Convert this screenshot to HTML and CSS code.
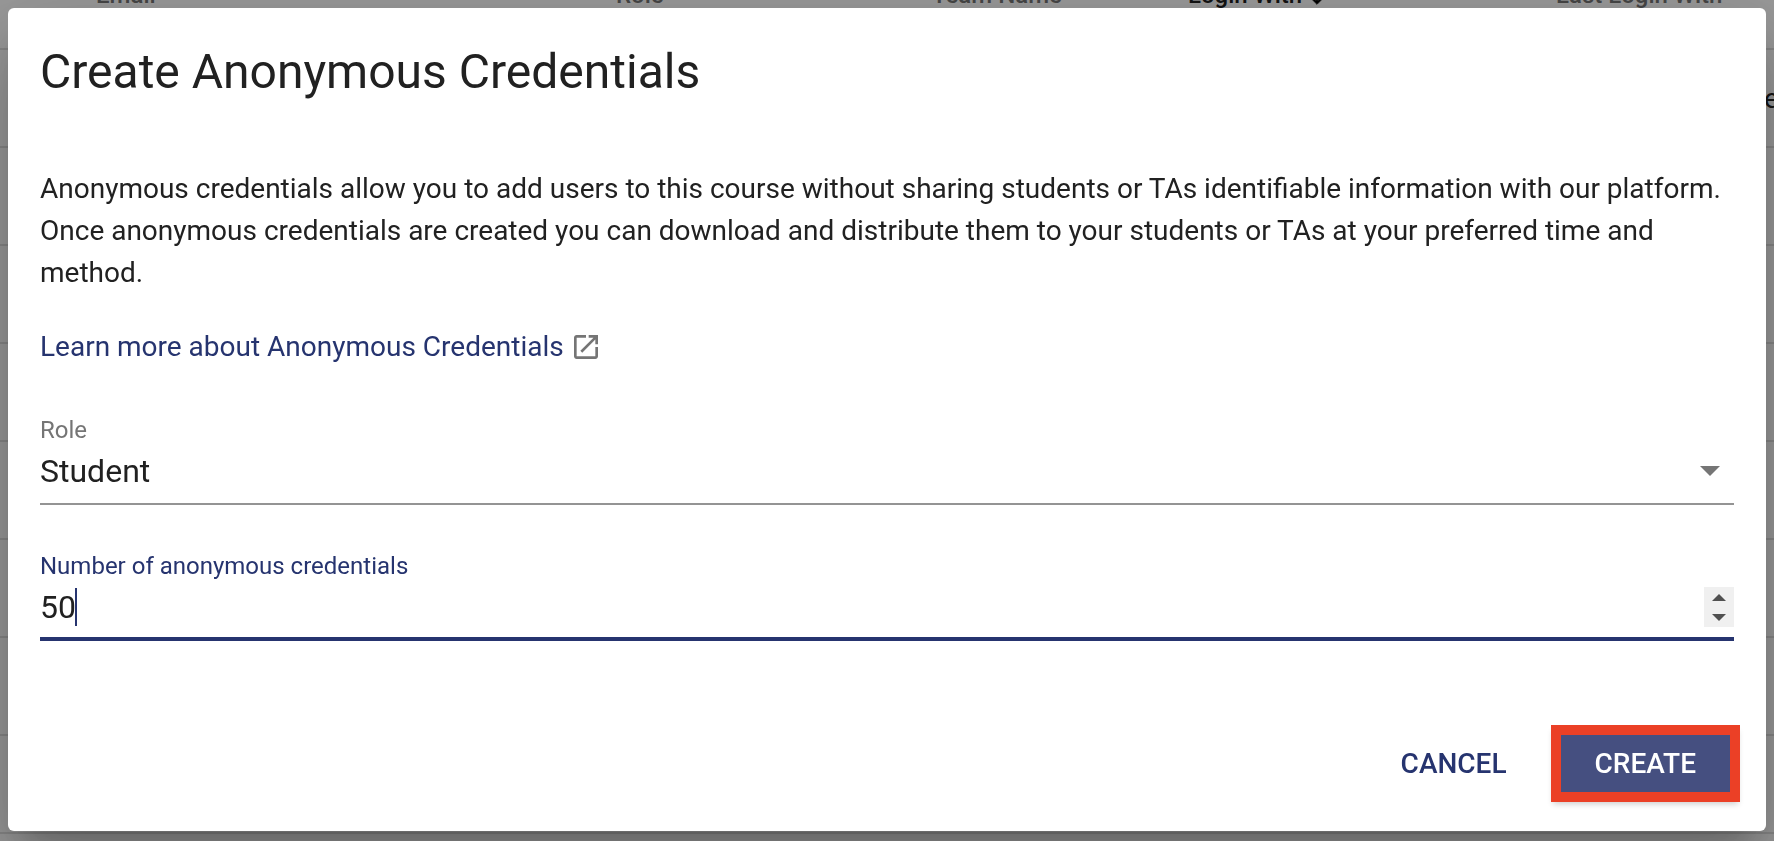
FILE: index.html
```html
<!DOCTYPE html>
<html lang="en">
<head>
  <meta charset="UTF-8">
  <meta name="viewport" content="width=device-width, initial-scale=1.0">
  <title>Create Anonymous Credentials</title>
  <link rel="stylesheet" href="styles.css">
</head>
<body>
  <table class="users">
    <thead>
      <tr>
        <th class="col-email">Email</th>
        <th class="col-role">Role</th>
        <th class="col-team">Team Name</th>
        <th class="col-login sorted">Login With
          <svg class="sort-icon" viewBox="0 0 24 24" aria-hidden="true"><path d="M20 12l-1.410-1.410L13 16.170V4h-2v12.170l-5.580-5.590L4 12l8 8 8-8z"/></svg>
        </th>
        <th class="col-last">Last Login With</th>
        <th class="col-end"></th>
      </tr>
    </thead>
    <tbody>
      <tr><td colspan="5"></td><td>e</td></tr>
      <tr><td colspan="6"></td></tr>
      <tr><td colspan="6"></td></tr>
      <tr><td colspan="6"></td></tr>
      <tr><td colspan="6"></td></tr>
      <tr><td colspan="6"></td></tr>
      <tr><td colspan="6"></td></tr>
      <tr><td colspan="6"></td></tr>
    </tbody>
  </table>

  <div class="backdrop">
    <form class="dialog" role="dialog" aria-labelledby="dialog-title">
      <h1 id="dialog-title">Create Anonymous Credentials</h1>

      <p class="intro">Anonymous credentials allow you to add users to this course without sharing students or TAs identifiable information with our platform. Once anonymous credentials are created you can download and distribute them to your students or TAs at your preferred time and method.</p>

      <a class="learn-more" href="#">Learn more about Anonymous Credentials
        <svg viewBox="0 0 24 24" aria-hidden="true"><path d="M19 19H5V5h7V3H5c-1.110 0-2 .9-2 2v14c0 1.100.890 2 2 2h14c1.100 0 2-.9 2-2v-7h-2v7zM14 3v2h3.590l-9.830 9.830 1.410 1.410L19 6.410V10h2V3h-7z"/></svg>
      </a>

      <div class="field">
        <label for="role">Role</label>
        <div class="control">
          <select id="role">
            <option>Student</option>
            <option>TA</option>
          </select>
          <svg class="arrow" viewBox="0 0 20 10" aria-hidden="true"><path d="M0 0h20L10 10z"/></svg>
        </div>
      </div>

      <div class="field focused">
        <label for="count">Number of anonymous credentials</label>
        <div class="control">
          <input type="number" id="count" min="1" value="50">
          <span class="caret"></span>
          <div class="spinner">
            <button type="button" aria-label="Increase" onclick="document.getElementById('count').stepUp()">
              <svg viewBox="0 0 14 7"><path d="M0 7h14L7 0z"/></svg>
            </button>
            <button type="button" aria-label="Decrease" onclick="document.getElementById('count').stepDown()">
              <svg viewBox="0 0 14 7"><path d="M0 0h14L7 7z"/></svg>
            </button>
          </div>
        </div>
      </div>

      <div class="actions">
        <button type="button" class="btn">CANCEL</button>
        <button type="button" class="btn btn-create">CREATE</button>
      </div>
    </form>
  </div>
</body>
</html>
```
FILE: styles.css
```css
* {
  box-sizing: border-box;
}

body {
  margin: 0;
  height: 100vh;
  overflow: hidden;
  font-family: Roboto, "Liberation Sans", sans-serif;
  font-size: 28px;
  color: #212121;
  background-color: #fff;
}

/* users table, scrolled up behind the dialog */
.users {
  width: 100%;
  margin-top: -58px;
  table-layout: fixed;
  border-collapse: separate;
  border-spacing: 0;
}

.users th,
.users td {
  height: 98px;
  padding: 0;
  border-bottom: 2px solid #e0e0e0;
  text-align: left;
  white-space: nowrap;
}

.users th {
  height: 108px;
  font-size: 24px;
  font-weight: 500;
  color: #757575;
}

.users .sorted {
  color: #212121;
}

.users .col-email {
  width: 616px;
  padding-left: 96px;
}

.col-role {
  width: 316px;
}

.col-team {
  width: 256px;
}

.col-login {
  width: 368px;
}

.col-end {
  width: 10px;
}

.sort-icon {
  width: 22px;
  height: 22px;
  margin-left: -2px;
  stroke: #212121;
  vertical-align: middle;
}

.backdrop {
  position: fixed;
  inset: 0;
  padding: 8px;
  background-color: rgba(0, 0, 0, 0.4);
}

.dialog {
  display: flex;
  flex-direction: column;
  padding: 32px 32px 29px;
  background-color: #fff;
  border-radius: 6px;
  box-shadow: 0 22px 30px -14px rgba(0, 0, 0, 0.2),
    0 48px 76px 6px rgba(0, 0, 0, 0.14),
    0 18px 92px 16px rgba(0, 0, 0, 0.12);
}

h1 {
  margin: 0 0 64px;
  font-size: 48px;
  font-weight: 400;
  line-height: 64px;
}

.intro {
  margin: 0 0 32px;
  line-height: 42px;
}

.learn-more {
  display: flex;
  align-items: center;
  align-self: flex-start;
  gap: 6px;
  margin-bottom: 47px;
  line-height: 42px;
  color: #26346f;
  text-decoration: none;
}

.learn-more svg {
  width: 32px;
  height: 32px;
  fill: #757575;
}

.field {
  margin-bottom: 46px;
  border-bottom: 2px solid #949494;
}

.field label {
  display: block;
  font-size: 24px;
  line-height: 31px;
  color: #757575;
}

.control {
  position: relative;
  display: flex;
  align-items: center;
  padding: 5px 0 12px;
}

.control select,
.control input {
  flex: 1;
  min-width: 0;
  height: 40px;
  padding: 0;
  border: none;
  outline: none;
  font: inherit;
  font-size: 32px;
  color: inherit;
  background: none;
  appearance: none;
}

.control input {
  appearance: textfield;
}

.control input::-webkit-inner-spin-button {
  display: none;
}

.arrow {
  position: absolute;
  right: 14px;
  width: 20px;
  height: 10px;
  fill: #757575;
  pointer-events: none;
}

.focused {
  border-bottom: 4px solid #26346f;
}

.focused label {
  color: #26346f;
}

.focused .control {
  padding-bottom: 10px;
}

.caret {
  position: absolute;
  left: 35px;
  width: 2px;
  height: 38px;
  background-color: #26346f;
}

.spinner {
  display: flex;
  flex-direction: column;
  width: 30px;
  height: 40px;
  background-color: #f0f0f0;
}

.spinner button {
  display: flex;
  flex: 1;
  align-items: center;
  justify-content: center;
  padding: 0;
  border: none;
  background: none;
}

.spinner svg {
  width: 14px;
  height: 7px;
  fill: #505050;
}

.actions {
  display: flex;
  justify-content: flex-end;
  align-items: center;
  gap: 28px;
  margin: 38px -6px 0 0;
}

.btn {
  padding: 12px 16px;
  border: none;
  font: inherit;
  font-weight: 500;
  line-height: 33px;
  color: #26346f;
  background: none;
  cursor: pointer;
}

.btn-create {
  padding: 12px 34px;
  border: 10px solid #eb4026;
  color: #fff;
  background-color: #454f80;
  box-shadow: 0 4px 6px -2px rgba(0, 0, 0, 0.2);
}
```
